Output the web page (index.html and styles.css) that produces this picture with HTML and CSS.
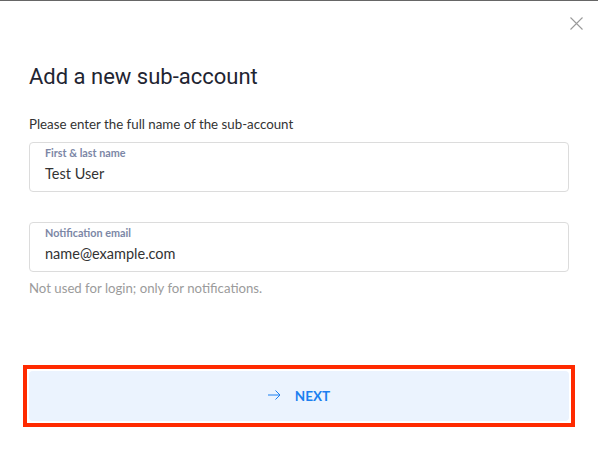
FILE: index.html
```html
<!DOCTYPE html>
<html lang="en">
<head>
<meta charset="utf-8">
<title>Add a new sub-account</title>
<link rel="stylesheet" href="styles.css">
</head>
<body>
<div class="dialog">
  <button class="close" aria-label="Close">
    <svg width="13" height="13" viewBox="0 0 13 13"><path d="M0.5 0.5 L12.5 12.5 M12.5 0.5 L0.5 12.5" stroke="#9a9a9a" stroke-width="1.1" fill="none"/></svg>
  </button>
  <h1 class="title">Add a new sub-account</h1>
  <p class="intro">Please enter the full name of the sub-account</p>
  <div class="field">
    <span class="field-label">First &amp; last name</span>
    <span class="field-value">Test User</span>
  </div>
  <div class="field field-email">
    <span class="field-label">Notification email</span>
    <span class="field-value">name@example.com</span>
  </div>
  <p class="hint">Not used for login; only for notifications.</p>
  <div class="actions">
    <button class="next">
      <svg width="13" height="10" viewBox="0 0 13 10"><path d="M0 5 H12 M7.5 0.5 L12 5 L7.5 9.5" stroke="#1b7ff0" stroke-width="1" fill="none"/></svg>
      <span>NEXT</span>
    </button>
  </div>
</div>
</body>
</html>
```
FILE: styles.css
```css
* { box-sizing: border-box; }
html, body { margin: 0; padding: 0; background: #fff; }
body { font-family: Lato, "Liberation Sans", sans-serif; }
.dialog {
  position: relative;
  height: 470px;
  border-top: 1px solid #666;
  padding: 0 29px;
  display: flex;
  flex-direction: column;
}
.close {
  position: absolute;
  top: 16px;
  right: 15px;
  padding: 0;
  border: 0;
  background: none;
  width: 13px;
  height: 13px;
  display: flex;
}
.title {
  margin: 61px 0 0;
  font-family: Roboto, sans-serif;
  font-weight: 400;
  font-size: 22px;
  line-height: 30px;
  color: #1f2532;
}
.intro {
  margin: 23px 0 0;
  font-size: 13.3px;
  line-height: 18px;
  color: #333;
}
.field {
  margin-top: 9px;
  height: 50px;
  border: 1px solid #dcdcdc;
  border-radius: 4px;
  padding: 3px 15px 0;
  display: flex;
  flex-direction: column;
}
.field-email { margin-top: 30px; }
.field-label {
  font-size: 10.8px;
  font-weight: 700;
  line-height: 14px;
  color: #7c87a6;
}
.field-value {
  margin-top: 4px;
  font-size: 14.5px;
  line-height: 20px;
  color: #333;
}
.hint {
  margin: 7px 0 0;
  font-size: 13.2px;
  line-height: 18px;
  color: #9b9b9b;
}
.actions {
  margin: auto -6px 43px;
  border: 4px solid #ff2a00;
  padding: 2px;
}
.next {
  width: 100%;
  height: 50px;
  border: 0;
  border-radius: 4px;
  background: #ebf3fe;
  display: flex;
  align-items: center;
  justify-content: center;
  gap: 14px;
  font-family: Lato, sans-serif;
  font-weight: 700;
  font-size: 13.5px;
  color: #1b7ff0;
}
.next svg { margin-top: -3px; }
```
